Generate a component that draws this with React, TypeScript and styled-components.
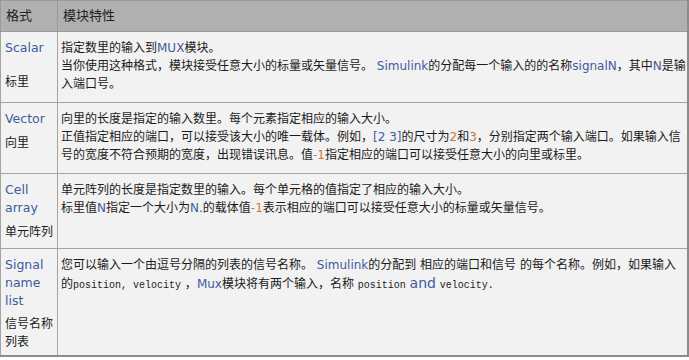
import styled, { createGlobalStyle } from 'styled-components';

const GlobalStyle = createGlobalStyle`
  html, body {
    margin: 0;
    padding: 0;
    background: #ffffff;
  }
`;

const BLUE = '#3d5c9e';
const ORANGE = '#c87a35';

const Table = styled.table`
  width: 689px;
  border-collapse: collapse;
  table-layout: fixed;
  background: #f2f2f2;
  border-top: 1px solid #a0a0a0;
  border-left: 1px solid #a0a0a0;
  border-right: 2px solid #8c8c8c;
  border-bottom: 2px solid #8c8c8c;
  font-family: 'DejaVu Sans', 'Noto Sans CJK SC', sans-serif;
  font-size: 12px;
  line-height: 18px;
  color: #1a1a1a;
`;

const HeadCell = styled.th<{ $w?: number }>`
  ${p => (p.$w ? `width: ${p.$w}px;` : '')}
  height: 30px;
  padding: 0 3px 0 5px;
  background: #b0b0b0;
  border: 1px solid #9a9a9a;
  text-align: left;
  font-weight: normal;
  font-size: 13px;
  color: #222;
`;

const Row = styled.tr<{ $h: number }>`
  height: ${p => p.$h}px;
`;

const KeyCell = styled.td`
  width: 48px;
  padding: 7px 3px 4px 4px;
  border: 1px solid #a3a3a3;
  vertical-align: top;
`;

const DescCell = styled.td`
  padding: 7px 3px 4px 3px;
  border: 1px solid #a3a3a3;
  vertical-align: top;
`;

const Term = styled.div`
  color: ${BLUE};
  font-size: 12.5px;
`;

const Label = styled.div<{ $gap: number }>`
  margin-top: ${p => p.$gap}px;
`;

const Line = styled.div`
  white-space: nowrap;
`;

const En = styled.span`
  color: ${BLUE};
`;

const Num = styled.span`
  color: ${ORANGE};
`;

const Mono = styled.span`
  font-family: 'Liberation Mono', monospace;
  font-size: 10px;
`;

const Big = styled.span`
  color: ${BLUE};
  font-size: 14px;
`;

export default function App() {
  return (
    <>
      <GlobalStyle />
      <Table>
        <thead>
          <tr>
            <HeadCell $w={48}>格式</HeadCell>
            <HeadCell>模块特性</HeadCell>
          </tr>
        </thead>
        <tbody>
          <Row $h={71}>
            <KeyCell>
              <Term>Scalar</Term>
              <Label $gap={16}>标里</Label>
            </KeyCell>
            <DescCell>
              <Line>指定数里的输入到<En>MUX</En>模块。</Line>
              <Line>
                当你使用这种格式，模块接受任意大小的标量或矢量信号。 <En>Simulink</En>的分配每一个输入的的名称<En>signalN</En>，其中<En>N</En>是输
              </Line>
              <Line>入端口号。</Line>
            </DescCell>
          </Row>
          <Row $h={71}>
            <KeyCell>
              <Term>Vector</Term>
              <Label $gap={6}>向里</Label>
            </KeyCell>
            <DescCell>
              <Line>向里的长度是指定的输入数里。每个元素指定相应的输入大小。</Line>
              <Line>
                正值指定相应的端口，可以接受该大小的唯一载体。例如，<En>[2 3]</En>的尺寸为<Num>2</Num>和<Num>3</Num>，分别指定两个输入端口。如果输入信
              </Line>
              <Line>
                号的宽度不符合预期的宽度，出现错误讯息。值<Num>-1</Num>指定相应的端口可以接受任意大小的向里或标里。
              </Line>
            </DescCell>
          </Row>
          <Row $h={75}>
            <KeyCell>
              <Term>Cell</Term>
              <Term>array</Term>
              <Label $gap={6}>单元阵列</Label>
            </KeyCell>
            <DescCell>
              <Line>单元阵列的长度是指定数里的输入。每个单元格的值指定了相应的输入大小。</Line>
              <Line>
                标里值<En>N</En>指定一个大小为<En>N.</En>的载体值<Num>-1</Num>表示相应的端口可以接受任意大小的标量或矢量信号。
              </Line>
            </DescCell>
          </Row>
          <Row $h={106}>
            <KeyCell>
              <Term>Signal</Term>
              <Term>name</Term>
              <Term>list</Term>
              <Label $gap={5}>信号名称列表</Label>
            </KeyCell>
            <DescCell>
              <Line>
                您可以输入一个由逗号分隔的列表的信号名称。 <En>Simulink</En>的分配到 相应的端口和信号 的每个名称。例如，如果输入
              </Line>
              <Line>
                的<Mono>position, velocity</Mono> ，<En>Mux</En>模块将有两个输入，名称 <Mono>position</Mono> <Big>and</Big> <Mono>velocity.</Mono>
              </Line>
            </DescCell>
          </Row>
        </tbody>
      </Table>
    </>
  );
}
